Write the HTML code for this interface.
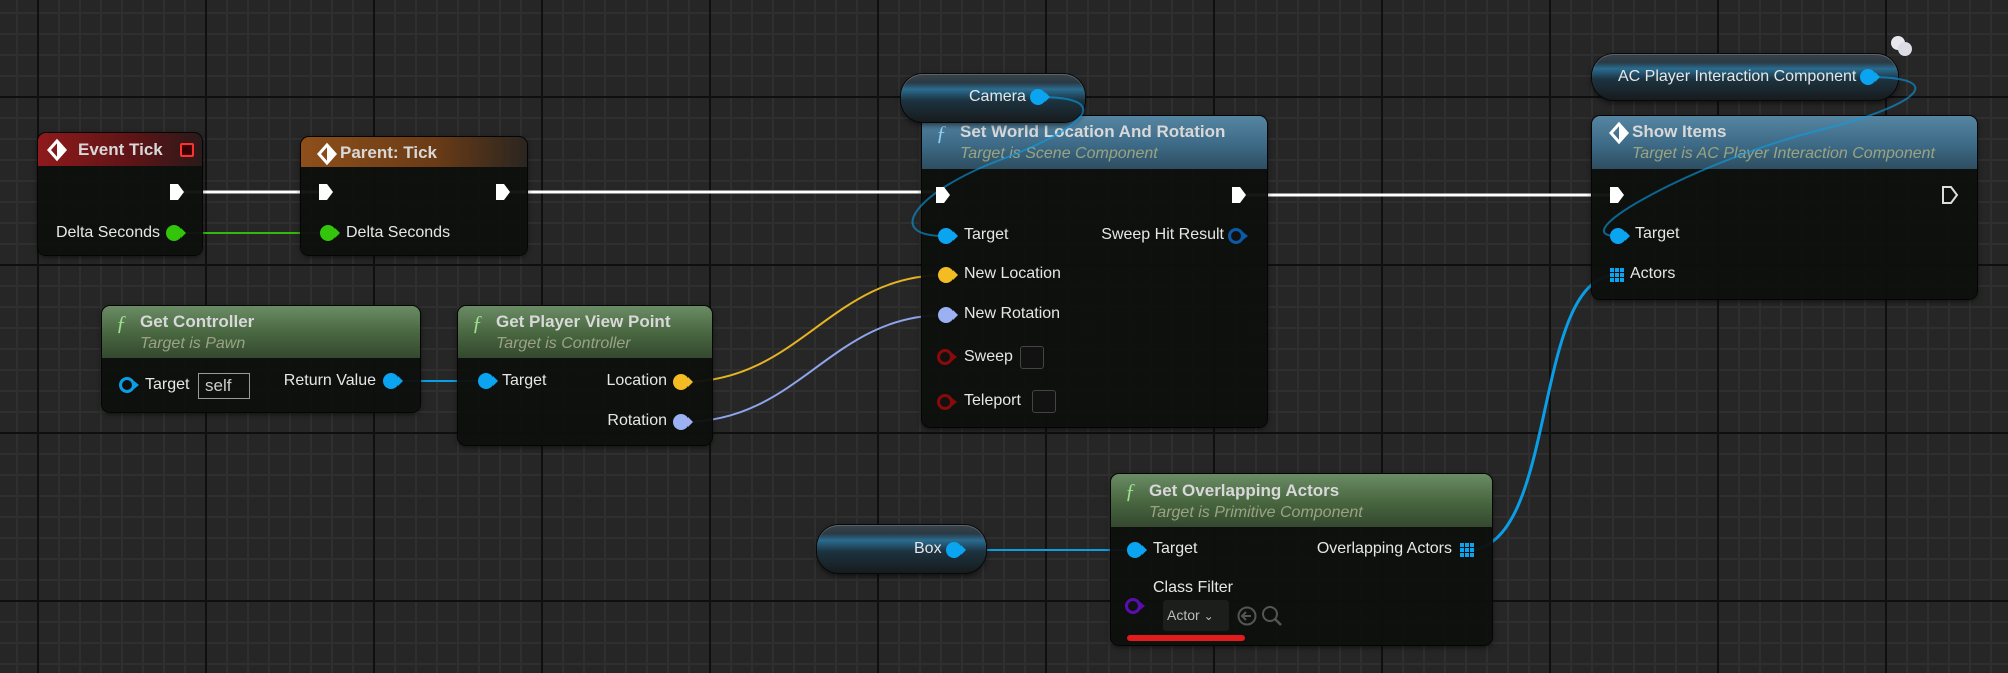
<!DOCTYPE html>
<html><head><meta charset="utf-8"><style>
*{margin:0;padding:0;box-sizing:border-box}
html,body{width:2008px;height:673px;overflow:hidden}
body{position:relative;font-family:"Liberation Sans",sans-serif;color:#e6e6e6;
background-color:#262626;
background-image:
linear-gradient(90deg,#0f0f0f 0 2px,transparent 2px),
linear-gradient(0deg,transparent 0 166px,#0f0f0f 166px),
linear-gradient(90deg,#2f2f2f 0 2px,transparent 2px),
linear-gradient(0deg,transparent 0 19px,#2f2f2f 19px);
background-size:168px 168px,168px 168px,21px 21px,21px 21px;
background-position:37px 0,0 -72px,16px 0,0 -9px;}
.n{position:absolute;background:rgba(14,16,14,.96);border-radius:8px;box-shadow:0 0 0 1px #050505,0 2px 6px rgba(0,0,0,.6)}
.h{position:absolute;left:0;right:0;top:0;border-radius:8px 8px 0 0}
.t{position:absolute;font-size:16px;white-space:nowrap}
.r{position:absolute;font-size:16px;white-space:nowrap;text-align:right}
.tt{position:absolute;font-size:17px;font-weight:bold;color:#d8d8d8;white-space:nowrap}
.st{position:absolute;font-size:16px;font-style:italic;color:#9aa382;white-space:nowrap}
.f{position:absolute;font-size:21px;font-style:italic;font-family:"Liberation Serif",serif}
.v{position:absolute;border-radius:22px;background:linear-gradient(180deg,#3a4248 0,#2a3a44 18%,#2a6c90 32%,#1c3340 55%,#171b1d 100%);box-shadow:0 0 0 1px #080808,inset 0 1px 0 #5a646c,0 3px 6px rgba(0,0,0,.6)}
.gh{background:linear-gradient(180deg,#6a8c64,#47653f 55%,#34482f)}
.bh{background:linear-gradient(180deg,#5585a2,#3d6a86 55%,#2e4d60)}
svg{position:absolute;left:0;top:0}
</style></head><body>

<svg width="2008" height="673" style="z-index:0">
<g fill="none">
<path d="M177 192 H326" stroke="#fff" stroke-width="3"/>
<path d="M175 233 H326" stroke="#33b80c" stroke-width="2"/>
<path d="M503 192 H943" stroke="#fff" stroke-width="3"/>
<path d="M1239 195 H1617" stroke="#fff" stroke-width="3"/>
<path d="M393 381 H484" stroke="#0a9ee6" stroke-width="2"/>
<path d="M683 382 C800 382 830 275 945 275" stroke="#e5b422" stroke-width="2"/>
<path d="M683 422 C800 422 830 315 945 315" stroke="#8ea4ec" stroke-width="2"/>
<path d="M955 550 H1134" stroke="#0a9ee6" stroke-width="2"/>
<path d="M1467 550 C1560 550 1530 275 1617 275" stroke="#0a9ee6" stroke-width="3"/>
</g></svg>

<div class="n" style="left:38px;top:133px;width:164px;height:122px">
<div class="h" style="height:33px;background:linear-gradient(90deg,#8e1a1c,#5c1416 60%,#2a1a1a)"></div>
<div class="tt" style="left:40px;top:7px">Event Tick</div>
<div style="position:absolute;left:142px;top:10px;width:14px;height:14px;border:2px solid #ff3030;background:#3a0000;border-radius:2px"></div>
<div class="r" style="right:42px;top:91px">Delta Seconds</div>
</div>
<div class="n" style="left:301px;top:137px;width:226px;height:118px">
<div class="h" style="height:30px;background:linear-gradient(90deg,#8e4f1a,#6a3b16 60%,#2a2520)"></div>
<div class="tt" style="left:39px;top:6px">Parent: Tick</div>
<div class="t" style="left:45px;top:87px">Delta Seconds</div>
</div>
<div class="n" style="left:102px;top:306px;width:318px;height:106px">
<div class="h gh" style="height:52px"></div>
<div class="f" style="left:14px;top:5px;color:#9fe090">ƒ</div>
<div class="tt" style="left:38px;top:6px">Get Controller</div>
<div class="st" style="left:38px;top:29px">Target is Pawn</div>
<div class="t" style="left:43px;top:70px">Target</div>
<div style="position:absolute;left:96px;top:67px;width:52px;height:26px;border:1px solid #9a9a9a;font-size:17px;padding-left:6px;line-height:24px;color:#ccc">self</div>
<div class="r" style="right:44px;top:66px">Return Value</div>
</div>
<div class="n" style="left:458px;top:306px;width:254px;height:139px">
<div class="h gh" style="height:52px"></div>
<div class="f" style="left:14px;top:5px;color:#9fe090">ƒ</div>
<div class="tt" style="left:38px;top:6px">Get Player View Point</div>
<div class="st" style="left:38px;top:29px">Target is Controller</div>
<div class="t" style="left:44px;top:66px">Target</div>
<div class="r" style="right:45px;top:66px">Location</div>
<div class="r" style="right:45px;top:106px">Rotation</div>
</div>
<div class="n" style="left:922px;top:116px;width:345px;height:311px">
<div class="h bh" style="height:53px"></div>
<div class="f" style="left:14px;top:5px;color:#8ed0f0">ƒ</div>
<div class="tt" style="left:38px;top:6px">Set World Location And Rotation</div>
<div class="st" style="left:38px;top:29px">Target is Scene Component</div>
<div class="t" style="left:42px;top:110px">Target</div>
<div class="r" style="right:43px;top:110px">Sweep Hit Result</div>
<div class="t" style="left:42px;top:149px">New Location</div>
<div class="t" style="left:42px;top:189px">New Rotation</div>
<div class="t" style="left:42px;top:232px">Sweep</div>
<div style="position:absolute;left:98px;top:230px;width:24px;height:23px;border:1px solid #444;border-radius:3px;background:#121212"></div>
<div class="t" style="left:42px;top:276px">Teleport</div>
<div style="position:absolute;left:110px;top:274px;width:24px;height:23px;border:1px solid #444;border-radius:3px;background:#121212"></div>
</div>
<div class="v" style="left:901px;top:74px;width:184px;height:48px"></div>
<div class="t" style="left:969px;top:88px;z-index:2">Camera</div>
<div class="n" style="left:1111px;top:474px;width:381px;height:171px">
<div class="h gh" style="height:53px"></div>
<div class="f" style="left:14px;top:5px;color:#9fe090">ƒ</div>
<div class="tt" style="left:38px;top:7px">Get Overlapping Actors</div>
<div class="st" style="left:38px;top:30px">Target is Primitive Component</div>
<div class="t" style="left:42px;top:66px">Target</div>
<div class="r" style="right:40px;top:66px">Overlapping Actors</div>
<div class="t" style="left:42px;top:105px">Class Filter</div>
<div style="position:absolute;left:52px;top:126px;width:66px;height:31px;background:#1c1e1c;border-radius:3px;font-size:14px;color:#bbb;padding:7px 0 0 4px">Actor <span style="font-size:12px">&#8964;</span></div>
<svg width="60" height="30" style="left:124px;top:128px"><circle cx="12" cy="14" r="8.5" fill="none" stroke="#555" stroke-width="2"/><path d="M16 14H8M11 10L7 14L11 18" stroke="#555" stroke-width="2" fill="none"/><circle cx="35" cy="12" r="7" fill="none" stroke="#555" stroke-width="2"/><path d="M40 17L46 23" stroke="#555" stroke-width="2.5"/></svg>
<div style="position:absolute;left:16px;top:161px;width:118px;height:6px;background:#e21c1c;border-radius:3px"></div>
</div>
<div class="v" style="left:817px;top:525px;width:169px;height:48px"></div>
<div class="t" style="left:914px;top:540px;z-index:2">Box</div>
<div class="v" style="left:1592px;top:54px;width:306px;height:46px"></div>
<div class="t" style="left:1618px;top:68px;z-index:2">AC Player Interaction Component</div>
<div class="n" style="left:1592px;top:116px;width:385px;height:183px">
<div class="h bh" style="height:53px"></div>
<div class="tt" style="left:40px;top:6px">Show Items</div>
<div class="st" style="left:40px;top:29px">Target is AC Player Interaction Component</div>
<div class="t" style="left:43px;top:109px">Target</div>
<div class="t" style="left:38px;top:149px">Actors</div>
</div>

<svg width="2008" height="673" style="z-index:3">
<g fill="none" stroke-width="2" opacity="0.6">
<path d="M1038 97 C1120 97 1080 130 1000 160 C920 190 880 236 945 236" stroke="#0a9ee6"/>
<path d="M1868 77 C1950 77 1920 105 1820 130 C1700 160 1560 236 1617 236" stroke="#0a9ee6"/>
</g>
<g fill="#fff">
<path d="M170 184 H178 L184 192 L178 200 H170 Z"/>
<path d="M319 184 H327 L333 192 L327 200 H319 Z"/>
<path d="M496 184 H504 L510 192 L504 200 H496 Z"/>
<path d="M936 187 H944 L950 195 L944 203 H936 Z"/>
<path d="M1232 187 H1240 L1246 195 L1240 203 H1232 Z"/>
<path d="M1610 187 H1618 L1624 195 L1618 203 H1610 Z"/>
</g>
<path d="M1943 187 H1951 L1957 195 L1951 203 H1943 Z" fill="none" stroke="#ddd" stroke-width="2"/>
<g>
<circle cx="174" cy="233" r="8" fill="#33c40c"/><path d="M181 228 L186 233 L181 238Z" fill="#33c40c"/>
<circle cx="328" cy="233" r="8" fill="#33c40c"/><path d="M335 228 L340 233 L335 238Z" fill="#33c40c"/>
<circle cx="127" cy="385" r="6.5" fill="none" stroke="#0a9ee6" stroke-width="3"/><path d="M134 381 L139 385 L134 389Z" fill="#0a9ee6"/>
<circle cx="391" cy="381" r="8" fill="#0aa4f0"/><path d="M398 376 L403 381 L398 386Z" fill="#0aa4f0"/>
<circle cx="486" cy="381" r="8" fill="#0aa4f0"/><path d="M493 376 L498 381 L493 386Z" fill="#0aa4f0"/>
<circle cx="681" cy="382" r="8" fill="#f2bc22"/><path d="M688 377 L693 382 L688 387Z" fill="#f2bc22"/>
<circle cx="681" cy="422" r="8" fill="#9cb0f4"/><path d="M688 417 L693 422 L688 427Z" fill="#9cb0f4"/>
<circle cx="946" cy="236" r="8" fill="#0aa4f0"/><path d="M953 231 L958 236 L953 241Z" fill="#0aa4f0"/>
<circle cx="946" cy="275" r="8" fill="#f2bc22"/><path d="M953 270 L958 275 L953 280Z" fill="#f2bc22"/>
<circle cx="946" cy="315" r="8" fill="#9cb0f4"/><path d="M953 310 L958 315 L953 320Z" fill="#9cb0f4"/>
<circle cx="945" cy="357" r="6.5" fill="#111" stroke="#8a0a0a" stroke-width="3"/><path d="M952 353 L957 357 L952 361Z" fill="#8a0a0a"/>
<circle cx="945" cy="402" r="6.5" fill="#111" stroke="#8a0a0a" stroke-width="3"/><path d="M952 398 L957 402 L952 406Z" fill="#8a0a0a"/>
<circle cx="1236" cy="236" r="6.5" fill="#111" stroke="#0a5aa6" stroke-width="3"/><path d="M1243 232 L1248 236 L1243 240Z" fill="#0a5aa6"/>
<circle cx="1038" cy="97" r="8" fill="#0aa4f0"/><path d="M1045 92 L1050 97 L1045 102Z" fill="#0aa4f0"/>
<circle cx="954" cy="550" r="8" fill="#0aa4f0"/><path d="M961 545 L966 550 L961 555Z" fill="#0aa4f0"/>
<circle cx="1135" cy="550" r="8" fill="#0aa4f0"/><path d="M1142 545 L1147 550 L1142 555Z" fill="#0aa4f0"/>
<circle cx="1133" cy="606" r="6.5" fill="#111" stroke="#5a0eb0" stroke-width="3"/><path d="M1140 602 L1145 606 L1140 610Z" fill="#5a0eb0"/>
<circle cx="1868" cy="77" r="8" fill="#0aa4f0"/><path d="M1875 72 L1880 77 L1875 82Z" fill="#0aa4f0"/>
<circle cx="1618" cy="236" r="8" fill="#0aa4f0"/><path d="M1625 231 L1630 236 L1625 241Z" fill="#0aa4f0"/>
</g>
<g fill="#0aa4f0">
<rect x="1460" y="543" width="4" height="4"/><rect x="1465" y="543" width="4" height="4"/><rect x="1470" y="543" width="4" height="4"/>
<rect x="1460" y="548" width="4" height="4"/><rect x="1465" y="548" width="4" height="4"/><rect x="1470" y="548" width="4" height="4"/>
<rect x="1460" y="553" width="4" height="4"/><rect x="1465" y="553" width="4" height="4"/><rect x="1470" y="553" width="4" height="4"/>
<rect x="1610" y="268" width="4" height="4"/><rect x="1615" y="268" width="4" height="4"/><rect x="1620" y="268" width="4" height="4"/>
<rect x="1610" y="273" width="4" height="4"/><rect x="1615" y="273" width="4" height="4"/><rect x="1620" y="273" width="4" height="4"/>
<rect x="1610" y="278" width="4" height="4"/><rect x="1615" y="278" width="4" height="4"/><rect x="1620" y="278" width="4" height="4"/>
</g>
<g>
<path d="M57 141 L65 150 L57 159 L49 150Z" fill="none" stroke="#fff" stroke-width="3"/><path d="M57 141 L65 150 L57 159Z" fill="#fff"/>
<path d="M327 145 L335 154 L327 163 L319 154Z" fill="none" stroke="#fff" stroke-width="3"/><path d="M327 145 L335 154 L327 163Z" fill="#fff"/>
<path d="M1619 124 L1627 133 L1619 142 L1611 133Z" fill="none" stroke="#fff" stroke-width="3"/><path d="M1619 124 L1627 133 L1619 142Z" fill="#fff"/>
</g>
<circle cx="1898" cy="43" r="7" fill="#e8e8ee"/><circle cx="1905" cy="49" r="7" fill="#dcdce4"/>
</svg>
</body></html>
